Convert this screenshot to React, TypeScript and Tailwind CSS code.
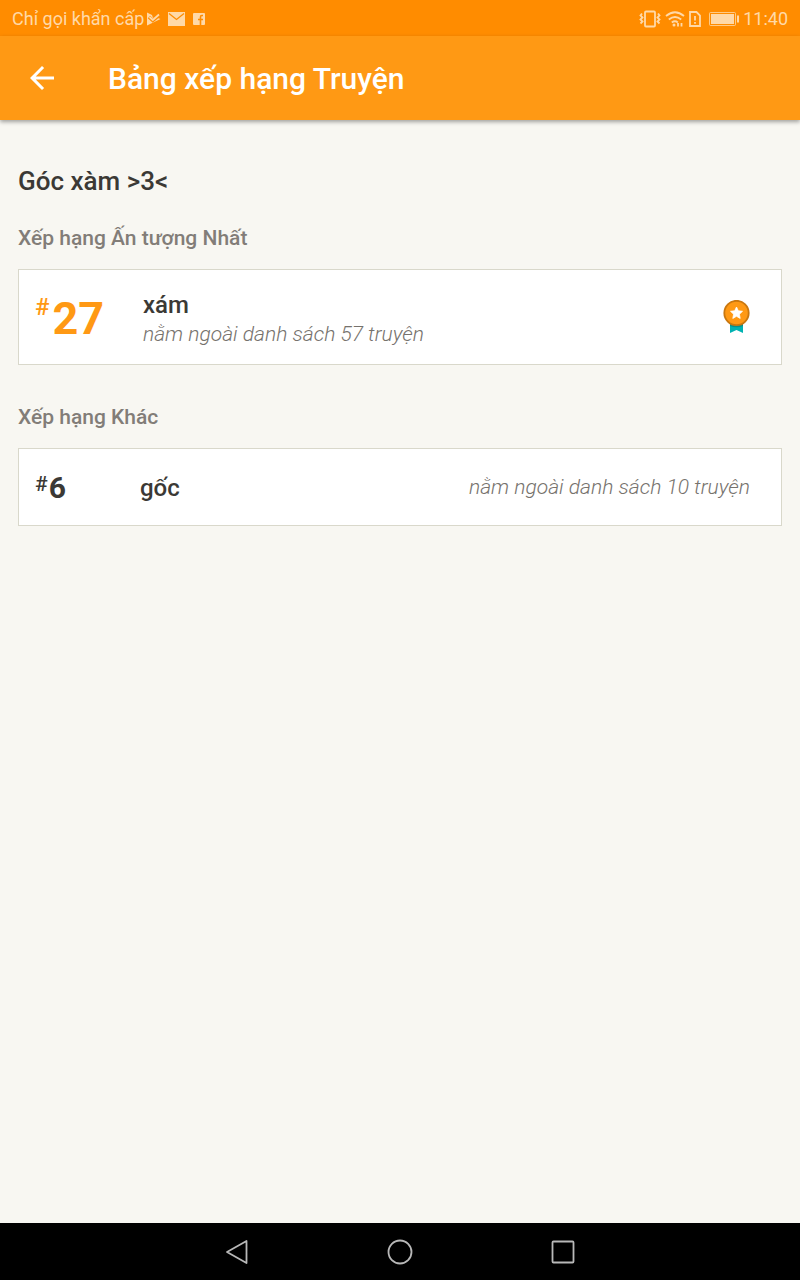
import React from 'react';

type Story = {
  rank: number;
  tag: string;
  total: number;
};

const readingTitle = 'Góc xàm >3<';

const topRanking: Story = { rank: 27, tag: 'xám', total: 57 };
const otherRankings: Story[] = [{ rank: 6, tag: 'gốc', total: 10 }];

export default function App() {
  return (
    <div className="min-h-screen flex flex-col bg-[#f8f7f2] font-['Roboto',sans-serif] text-[#3b3935]">
      <StatusBar />

      {/* App header */}
      <header className="relative flex items-center h-[84px] bg-[#ff9914] text-white shadow-[0_2px_4px_rgba(0,0,0,0.35)]">
        <button aria-label="Quay lại" className="w-[84px] h-full flex items-center justify-center">
          <svg width="36" height="36" viewBox="0 0 24 24" fill="currentColor">
            <path d="M20 11H7.83l5.59-5.59L12 4l-8 8 8 8 1.41-1.41L7.83 13H20v-2z" />
          </svg>
        </button>
        <h1 className="ml-6 pt-0.5 text-[30px] leading-10 font-medium">Bảng xếp hạng Truyện</h1>
      </header>

      {/* Rankings */}
      <main className="flex-1 px-[18px] pt-[45px]">
        <h2 className="text-[26px] leading-8 font-medium">{readingTitle}</h2>

        <section className="mt-[27px]">
          <SectionTitle>Xếp hạng Ấn tượng Nhất</SectionTitle>
          <div className="mt-[17px] h-24 pl-4 pr-[31px] flex items-center bg-white border border-[#d9d8cb]">
            <div className="w-[108px] pt-1 flex items-start text-[#ff9914]">
              <span className="text-[24px] leading-[30px] font-medium">#</span>
              <span className="ml-[3px] text-[45px] leading-[54px] font-bold">{topRanking.rank}</span>
            </div>
            <div className="flex-1 pt-1">
              <h4 className="text-[24px] leading-[30px] font-medium">{topRanking.tag}</h4>
              <RankDetail total={topRanking.total} />
            </div>
            <Medal />
          </div>
        </section>

        <section className="mt-[38px]">
          <SectionTitle>Xếp hạng Khác</SectionTitle>
          {otherRankings.map((story) => (
            <div
              key={story.tag}
              className="mt-[17px] h-[78px] pl-4 pr-[31px] flex items-center bg-white border border-[#d9d8cb]"
            >
              <div className="w-[105px] pt-0.5 flex items-start">
                <span className="text-[21px] leading-7 font-medium">#</span>
                <span className="ml-px text-[30px] leading-9 font-bold">{story.rank}</span>
              </div>
              <h4 className="flex-1 pt-0.5 text-[24px] leading-[30px] font-medium">{story.tag}</h4>
              <RankDetail total={story.total} />
            </div>
          ))}
        </section>
      </main>

      <SystemNav />
    </div>
  );
}

function SectionTitle({ children }: { children: React.ReactNode }) {
  return <h3 className="text-[21px] leading-7 font-medium text-[#827d78]">{children}</h3>;
}

function RankDetail({ total }: { total: number }) {
  return (
    <p className="text-[21px] leading-7 font-light italic text-[#76726d]">
      nằm ngoài danh sách {total} truyện
    </p>
  );
}

function Medal() {
  return (
    <svg width="27" height="34" viewBox="0 0 27 34">
      <path d="M7 22h13v11l-6.500-3L7 33z" fill="#00b2b2" />
      <path d="M7 22h13v4q-6.500 2.500-13 0z" fill="#078f8c" />
      <circle cx="13.500" cy="13" r="12.200" fill="#ff9914" stroke="#c9770f" strokeWidth="1.800" />
      <path
        d="M13.500 7l1.800 3.800 4.200.5-3.100 2.900.8 4.200-3.700-2.100-3.700 2.100.8-4.200-3.100-2.900 4.200-.5z"
        fill="#fff"
        stroke="#fff"
        strokeWidth="0.800"
        strokeLinejoin="round"
      />
    </svg>
  );
}

function StatusBar() {
  return (
    <div className="flex items-center justify-between h-9 px-3 bg-[#ff8c00] text-[#ffd9a8] text-[18px] leading-6">
      <div className="flex items-center pt-px">
        <span>Chỉ gọi khẩn cấp</span>
        <svg className="ml-0.5" width="15" height="16" viewBox="0 0 15 16">
          <path d="M1 1.500l5 2.500 1 3 2-1 5.500 2L1 14.500z" fill="currentColor" />
          <path d="M3 6l3.800 3.500L14 3.500" fill="none" stroke="#ff8c00" strokeWidth="3.500" />
          <path d="M3.500 6l3.300 3L13 3.500" fill="none" stroke="currentColor" strokeWidth="1.800" />
        </svg>
        <svg className="ml-[7px]" width="17" height="14" viewBox="0 0 17 14">
          <rect width="17" height="14" fill="currentColor" />
          <path d="M1 1.500l7.500 6 7.500-6" fill="none" stroke="#ff8c00" strokeWidth="1.300" />
        </svg>
        <svg className="ml-2" width="12" height="12" viewBox="0 0 12 12">
          <rect width="12" height="12" rx="1" fill="currentColor" />
          <path d="M10 2.500H8.800Q7.500 2.500 7.500 4v8M5 6.500h5" fill="none" stroke="#ff8c00" strokeWidth="1.600" />
        </svg>
      </div>
      <div className="flex items-center pt-px">
        {/* vibrate */}
        <svg width="22" height="18" viewBox="0 0 22 18" fill="none" stroke="currentColor" strokeWidth="1.800">
          <rect x="6" y="1.500" width="10" height="15" rx="1" />
          <path d="M3 3.500L1.500 5.500l2 2-2 2 2 2-2 2M19 3.500l1.500 2-2 2 2 2-2 2 2 2" />
        </svg>
        {/* wifi */}
        <svg className="ml-1" width="20" height="16" viewBox="0 0 20 16" fill="none" stroke="currentColor" strokeWidth="1.800">
          <path d="M1 5q9-7.500 18 0M3.800 8.500q6.200-5 12.400 0M6.800 11.500q3.200-2.400 6 0" />
          <circle cx="9" cy="14" r="1.500" fill="currentColor" stroke="none" />
          <path d="M13 12v3.500M16.500 12v3.500" strokeWidth="1.800" />
        </svg>
        {/* sim card */}
        <svg className="ml-1" width="12" height="16" viewBox="0 0 12 16" fill="none" stroke="currentColor" strokeWidth="1.800">
          <path d="M1 1h6.500L11 4.500V15H1z" />
          <path d="M6 5v4.500M6 11v1.800" />
        </svg>
        {/* battery */}
        <svg className="ml-2" width="30" height="14" viewBox="0 0 30 14">
          <rect x="0.500" y="0.500" width="26" height="13" rx="1" fill="none" stroke="currentColor" strokeOpacity="0.800" />
          <rect x="2" y="2" width="23" height="10" fill="currentColor" />
          <path d="M28 3.500h2v7h-2z" fill="currentColor" />
        </svg>
        <span className="ml-1">11:40</span>
      </div>
    </div>
  );
}

function SystemNav() {
  return (
    <nav className="flex items-center justify-center h-[57px] bg-black text-[#b8b8b8]">
      <NavButton label="Trở lại">
        <path d="M24.500 4v22L5 15z" />
      </NavButton>
      <NavButton label="Trang chủ">
        <circle cx="15" cy="15" r="11.500" />
      </NavButton>
      <NavButton label="Gần đây">
        <rect x="4.500" y="4.500" width="21" height="21" rx="1" />
      </NavButton>
    </nav>
  );
}

function NavButton({ label, children }: { label: string; children: React.ReactNode }) {
  return (
    <button aria-label={label} className="w-[163px] h-full flex items-center justify-center">
      <svg
        width="30"
        height="30"
        viewBox="0 0 30 30"
        fill="none"
        stroke="currentColor"
        strokeWidth="1.800"
        strokeLinejoin="round"
      >
        {children}
      </svg>
    </button>
  );
}
